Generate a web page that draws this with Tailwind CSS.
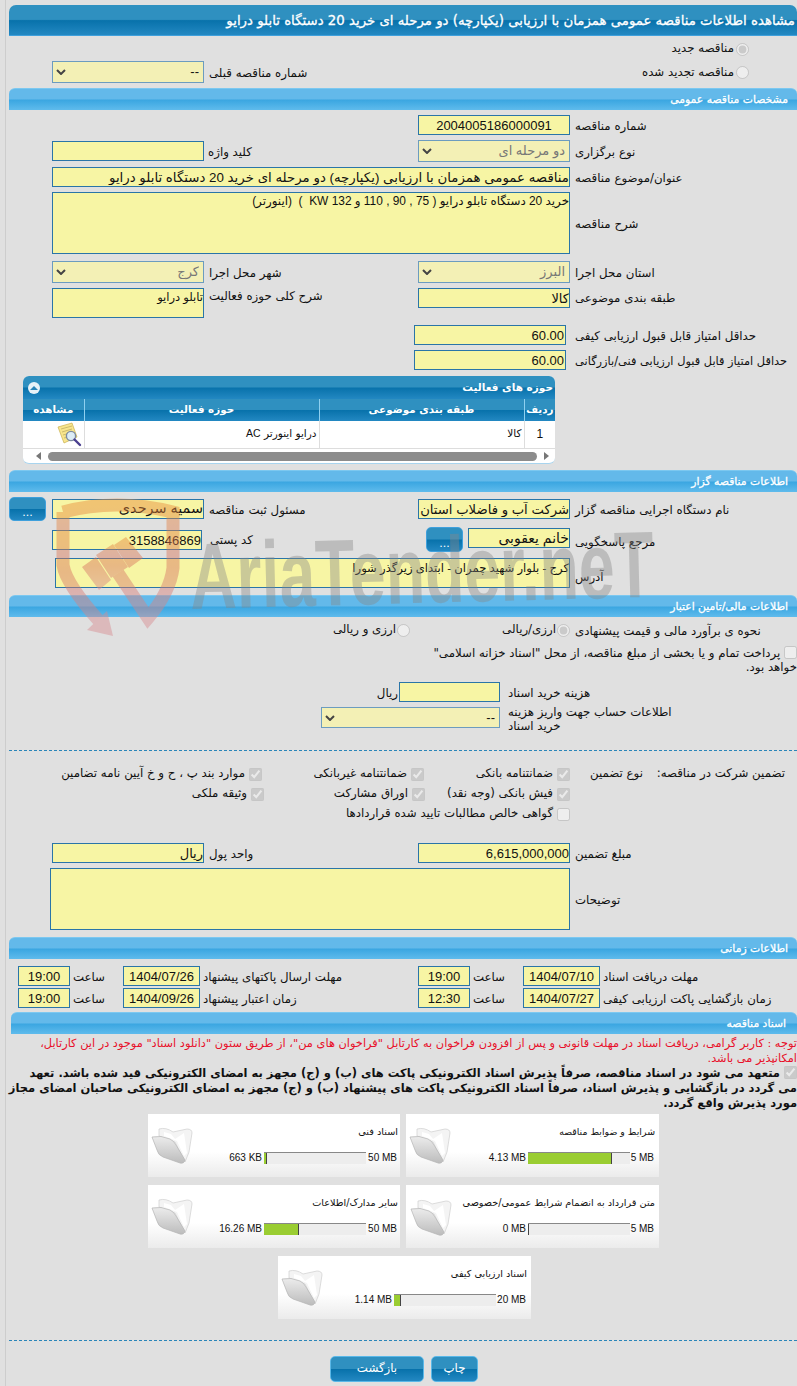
<!DOCTYPE html>
<html lang="fa" dir="rtl">

<head>
    <meta charset="UTF-8" />
    <meta name="viewport" content="width=device-width, initial-scale=1.0" />
    <title>مشاهده اطلاعات مناقصه</title>
    <script src="https://cdn.jsdelivr.net/npm/@tailwindcss/browser@4"></script>
</head>

<body class="bg-[#e0e0e0] font-['DejaVu_Sans',sans-serif] text-[11.8px] text-[#111] overflow-x-hidden">

    <svg class="absolute size-0">
        <defs>
            <linearGradient id="fold" x1="0" y1="0" x2="0" y2="1">
                <stop offset="0" stop-color="#ececec" />
                <stop offset="1" stop-color="#bcbcbc" />
            </linearGradient>
            <symbol id="folder" viewBox="0 0 42 38">
                <path d="M8 2 Q15 0 22 5 L36 2 Q41 2 41 6 L38 25 L34 35 L24 15 L8 9 Z" fill="#f4f4f4" stroke="#cfcfcf" stroke-width=".7" />
                <path d="M13 5 L20 7 L24 12 L33 6 L36 26 L33 29 L26 14 L13 9 Z" fill="#fff" />
                <path d="M1 10 Q10 8 19 12 Q23 14 25 18 L34 33 Q33 37 29 36 L12 30 Q7 28 6 23 Z" fill="url(#fold)" stroke="#b4b4b4" stroke-width=".7" />
            </symbol>
            <symbol id="chev" viewBox="0 0 10 6">
                <path d="M1 1 L5 5 L9 1" fill="none" stroke="#444" stroke-width="2" />
            </symbol>
        </defs>
    </svg>

    <main class="relative ml-[5px] w-[792px] border-l border-[#cdcdcd] pl-[3px] pt-[5px] h-[1386px] overflow-hidden [&_input]:font-['Liberation_Sans','DejaVu_Sans',sans-serif] [&_textarea]:font-['Liberation_Sans','DejaVu_Sans',sans-serif] [&_select]:font-['Liberation_Sans','DejaVu_Sans',sans-serif] [&_.text-left]:translate-y-[2px]">

        <!-- Title -->
        <h1 class="h-[31px] rounded-t-[7px] border-b border-[#3fa0dc] bg-[linear-gradient(#2f90c0_0%,#2f90c0_48%,#0872ab_52%,#2388c2_100%)] pr-[2px] text-[13.3px] leading-[32px] font-normal [-webkit-text-stroke:0.3px_white] text-white whitespace-nowrap">مشاهده اطلاعات مناقصه عمومی همزمان با ارزیابی (یکپارچه) دو مرحله ای خرید 20 دستگاه تابلو درایو</h1>

        <!-- Radios -->
        <div class="flex h-[24px] items-center pr-[48px]">
            <label class="flex translate-y-[1px] items-center gap-[2px]"><input type="radio" disabled checked class="size-[13px] m-0" />مناقصه جدید</label>
        </div>
        <div class="flex h-[28px] items-start">
            <label class="flex w-[379px] translate-y-[1px] items-center gap-[2px] pr-[48px] pt-[3px]"><input type="radio" disabled class="size-[13px] m-0" />مناقصه تجدید شده</label>
            <div class="w-[214px] pl-[5px] pt-[3px] text-left">شماره مناقصه قبلی</div>
            <div class="relative mt-[1px] h-[22px] w-[152px]">
                <select class="size-full appearance-none border border-[#6c9cbf] bg-[#f3f0b5] pr-[4px] text-[13px]"><option>--</option></select>
                <svg class="pointer-events-none absolute left-[4px] top-[8px]" width="10" height="6"><use href="#chev" /></svg>
            </div>
        </div>

        <!-- General -->
        <h2 class="h-[22px] rounded-t-[6px] border-t border-[#7cc8f0] bg-[linear-gradient(#63b9ea_0%,#63b9ea_48%,#3aa6e1_52%,#5fbbec_100%)] pr-[9px] text-[10.8px] leading-[21px] font-normal [-webkit-text-stroke:0.3px_white] text-white">مشخصات مناقصه عمومی</h2>

        <div class="mt-[5px] flex h-[20px] items-center">
            <div class="w-[227px] pl-[5px] text-left">شماره مناقصه</div>
            <input readonly value="2004005186000091" dir="ltr" class="h-[20px] w-[152px] border border-[#2a75a8] bg-[#f7f5a4] text-center text-[13px]" />
        </div>
        <div class="mt-[5px] flex h-[22px] items-center">
            <div class="w-[227px] pl-[5px] text-left">نوع برگزاری</div>
            <div class="relative h-[22px] w-[152px]">
                <select class="size-full appearance-none border border-[#6c9cbf] bg-[#f3f0b5] pr-[4px] text-[13px] text-[#777]"><option>دو مرحله ای</option></select>
                <svg class="pointer-events-none absolute left-[4px] top-[8px]" width="10" height="6"><use href="#chev" /></svg>
            </div>
            <div class="w-[214px] pl-[4px] text-left">کلید واژه</div>
            <input readonly class="h-[20px] w-[152px] border border-[#2a75a8] bg-[#f7f5a4]" />
        </div>
        <div class="mt-[5px] flex h-[20px] items-center">
            <div class="w-[227px] pl-[5px] text-left">عنوان/موضوع مناقصه</div>
            <input readonly value="مناقصه عمومی همزمان با ارزیابی (یکپارچه) دو مرحله ای خرید 20 دستگاه تابلو درایو" class="h-[20px] w-[518px] border border-[#2a75a8] bg-[#f7f5a4] text-[13.33px]" />
        </div>
        <div class="mt-[5px] flex h-[62px] items-center">
            <div class="w-[227px] pl-[5px] text-left">شرح مناقصه</div>
            <textarea readonly class="h-[62px] w-[518px] resize-none border border-[#2a75a8] bg-[#f7f5a4] text-[11.9px]">خرید 20 دستگاه تابلو درایو ( 75 , 90 , 110 و 132 KW  )  (اینورتر)</textarea>
        </div>
        <div class="mt-[7px] flex h-[22px] items-center">
            <div class="w-[227px] pl-[5px] text-left">استان محل اجرا</div>
            <div class="relative h-[22px] w-[152px]">
                <select class="size-full appearance-none border border-[#6c9cbf] bg-[#f3f0b5] pr-[4px] text-[13px] text-[#777]"><option>البرز</option></select>
                <svg class="pointer-events-none absolute left-[4px] top-[8px]" width="10" height="6"><use href="#chev" /></svg>
            </div>
            <div class="w-[214px] pl-[5px] text-left">شهر محل اجرا</div>
            <div class="relative h-[22px] w-[152px]">
                <select class="size-full appearance-none border border-[#6c9cbf] bg-[#f3f0b5] pr-[4px] text-[13px] text-[#777]"><option>کرج</option></select>
                <svg class="pointer-events-none absolute left-[4px] top-[8px]" width="10" height="6"><use href="#chev" /></svg>
            </div>
        </div>
        <div class="mt-[5px] flex h-[30px] items-start">
            <div class="w-[227px] pl-[5px] text-left">طبقه بندی موضوعی</div>
            <input readonly value="کالا" class="h-[20px] w-[152px] border border-[#2a75a8] bg-[#f7f5a4] text-[13px]" />
            <div class="-mt-[2px] w-[214px] pl-[5px] text-left">شرح کلی حوزه فعالیت</div>
            <textarea readonly class="h-[30px] w-[152px] resize-none border border-[#2a75a8] bg-[#f7f5a4] text-[11.5px]">تابلو درایو</textarea>
        </div>
        <div class="mt-[7px] flex h-[20px] items-center">
            <div class="w-[231px] pl-[9px] text-left">حداقل امتیاز قابل قبول ارزیابی کیفی</div>
            <input readonly value="60.00" class="h-[20px] w-[152px] border border-[#2a75a8] bg-[#f7f5a4] pr-[1px] text-[13px]" />
        </div>
        <div class="mt-[5px] flex h-[20px] items-center">
            <div class="w-[231px] pl-[9px] text-left whitespace-nowrap text-[11.4px]">حداقل امتیاز قابل قبول ارزیابی فنی/بازرگانی</div>
            <input readonly value="60.00" class="h-[20px] w-[152px] border border-[#2a75a8] bg-[#f7f5a4] pr-[1px] text-[13px]" />
        </div>

        <!-- Activity table -->
        <div class="mr-[242px] mt-[6px] h-[88px] w-[532px] overflow-hidden rounded-[6px] border-b border-[#a8d4ee] bg-white">
            <div class="flex h-[23px] items-center justify-between bg-[linear-gradient(#2f90c0_0%,#2f90c0_48%,#0872ab_52%,#2388c2_100%)] pl-[5px] pr-[2px] text-[10.5px] font-bold text-white">
                <span>حوزه های فعالیت</span>
                <span class="flex size-[12px] items-center justify-center rounded-full bg-[#e8f2f8]"><span class="border-x-[4px] border-b-[4px] border-x-transparent border-b-[#2a85b8]"></span></span>
            </div>
            <table class="w-[532px] table-fixed text-[10.5px]">
                <thead class="bg-[linear-gradient(#2f90c0_0%,#2f90c0_48%,#0872ab_52%,#2388c2_100%)] text-white">
                    <tr class="h-[22px]">
                        <th class="w-[31px] border-l border-[#8fd0f0] text-[10.4px] font-bold">ردیف</th>
                        <th class="w-[205px] border-l border-[#8fd0f0] text-[10.4px] font-bold">طبقه بندی موضوعی</th>
                        <th class="w-[235px] border-l border-[#8fd0f0] text-[10.4px] font-bold">حوزه فعالیت</th>
                        <th class="w-[61px] text-[10.4px] font-bold">مشاهده</th>
                    </tr>
                </thead>
                <tbody>
                    <tr class="h-[27px] border-b border-[#ddd]">
                        <td class="border-l border-[#ddd] text-center font-['Liberation_Sans',sans-serif] text-[12px]">1</td>
                        <td class="border-l border-[#ddd] pr-[2px]">کالا</td>
                        <td class="border-l border-[#ddd] pr-[2px]">درایو اینورتر <span class="font-['Liberation_Sans',sans-serif]">AC</span></td>
                        <td class="p-0">
                            <svg class="mr-[2px] block" width="25" height="25" viewBox="0 0 25 25">
                                <path d="M1 5 L15 1 L20 15 L7 21 Z" fill="#f8e58c" stroke="#c9b050" stroke-width=".7" />
                                <path d="M4 7 L15 4 M5 10 L15 7 M6 13 L13 11 M7 16 L11 15" stroke="#b8a860" stroke-width=".7" />
                                <circle cx="14" cy="14" r="4.6" fill="#dcecf6" stroke="#7d8ca0" stroke-width="1.4" />
                                <path d="M17.5 17.5 L23 23" stroke="#4a3f8f" stroke-width="2.4" stroke-linecap="round" />
                            </svg>
                        </td>
                    </tr>
                </tbody>
            </table>
            <div class="flex h-[15px] items-center px-[6px]">
                <span class="border-y-[4px] border-l-[5px] border-y-transparent border-l-[#777]"></span>
                <span class="mx-[7px] h-[9px] w-[489px] rounded-full bg-[#8c8c8c]"></span>
                <span class="border-y-[4px] border-r-[5px] border-y-transparent border-r-[#777]"></span>
            </div>
        </div>

        <!-- Tender organizer -->
        <h2 class="mt-[6px] h-[22px] rounded-t-[6px] border-t border-[#7cc8f0] bg-[linear-gradient(#63b9ea_0%,#63b9ea_48%,#3aa6e1_52%,#5fbbec_100%)] pr-[9px] text-[10.8px] leading-[21px] font-normal [-webkit-text-stroke:0.3px_white] text-white">اطلاعات مناقصه گزار</h2>

        <div class="mt-[5px] flex h-[24px] items-center">
            <div class="w-[227px] pl-[5px] text-left">نام دستگاه اجرایی مناقصه گزار</div>
            <input readonly value="شرکت آب و فاضلاب استان" class="h-[20px] w-[152px] border border-[#2a75a8] bg-[#f7f5a4] text-[13.2px]" />
            <div class="w-[214px] pl-[5px] text-left">مسئول ثبت مناقصه</div>
            <input readonly value="سمیه سرحدی" class="h-[20px] w-[152px] border border-[#2a75a8] bg-[#f7f5a4] text-[14.4px]" />
            <button class="mr-[6px] h-[24px] w-[37px] rounded-[5px] border border-[#3fa0dc] bg-[linear-gradient(#2f90c0_0%,#2f90c0_48%,#0872ab_52%,#2388c2_100%)] pt-[7px] text-[11px] leading-none text-white">...</button>
        </div>
        <div class="mt-[6px] flex h-[25px] items-start">
            <div class="w-[227px] pl-[5px] pt-[5px] text-left">مرجع پاسخگویی</div>
            <input readonly value="خانم یعقوبی" class="mt-[1px] h-[20px] w-[102px] border border-[#2a75a8] bg-[#f7f5a4] text-[14px]" />
            <button class="mr-[5px] h-[25px] w-[37px] rounded-[5px] border border-[#3fa0dc] bg-[linear-gradient(#2f90c0_0%,#2f90c0_48%,#0872ab_52%,#2388c2_100%)] pt-[7px] text-[11px] leading-none text-white">...</button>
            <div class="w-[224px] pl-[8px] pt-[3px] text-left">کد پستی</div>
            <input readonly value="3158846869" class="mt-[3px] h-[20px] w-[150px] border border-[#2a75a8] bg-[#f7f5a4] text-[13px]" />
        </div>
        <div class="mt-[6px] flex h-[30px] items-end">
            <div class="w-[227px] pl-[5px] pb-[3px] text-left">آدرس</div>
            <textarea readonly class="h-[30px] w-[515px] resize-none border border-[#2a75a8] bg-[#f7f5a4] text-[11.6px]">کرج - بلوار شهید چمران - ابتدای زیرگذر شورا</textarea>
        </div>

        <!-- Finance -->
        <h2 class="mt-[7px] h-[22px] rounded-t-[6px] border-t border-[#7cc8f0] bg-[linear-gradient(#63b9ea_0%,#63b9ea_48%,#3aa6e1_52%,#5fbbec_100%)] pr-[9px] text-[10.8px] leading-[21px] font-normal [-webkit-text-stroke:0.3px_white] text-white">اطلاعات مالی/تامین اعتبار</h2>

        <div class="mt-[3px] flex h-[20px] items-center">
            <div class="w-[227px] pl-[5px] text-left">نحوه ی برآورد مالی و قیمت پیشنهادی</div>
            <label class="flex w-[160px] items-center gap-[1px]"><input type="radio" disabled checked class="size-[13px] m-0" />ارزی/ریالی</label>
            <label class="flex items-center gap-[1px]"><input type="radio" disabled class="size-[13px] m-0" />ارزی و ریالی</label>
        </div>
        <p class="mt-[6px] h-[30px] w-[380px] leading-[14px]"><input type="checkbox" disabled class="ml-0 size-[13px] align-top" /> پرداخت تمام و یا بخشی از مبلغ مناقصه، از محل "اسناد خزانه اسلامی" خواهد بود.</p>
        <div class="mt-[6px] flex h-[20px] items-center">
            <div class="w-[297px] pl-[8px] text-left">هزینه خرید اسناد</div>
            <input readonly class="h-[20px] w-[101px] border border-[#2a75a8] bg-[#f7f5a4]" />
            <span class="mr-[1px] translate-y-[2px]">ریال</span>
        </div>
        <div class="mt-[5px] flex h-[28px] items-start">
            <div class="-mt-[4px] w-[297px] pl-[8px] pr-[118px] text-left leading-[14px]">اطلاعات حساب جهت واریز هزینه خرید اسناد</div>
            <div class="relative h-[21px] w-[179px]">
                <select class="size-full appearance-none border border-[#6c9cbf] bg-[#f3f0b5] pr-[4px] text-[13px]"><option>--</option></select>
                <svg class="pointer-events-none absolute left-[4px] top-[8px]" width="10" height="6"><use href="#chev" /></svg>
            </div>
        </div>

        <div class="mt-[15px] border-t border-dashed border-[#2a85b8]"></div>

        <!-- Guarantee -->
        <div class="mt-[13px] flex h-[20px] items-center">
            <div class="w-[154px] pr-[12px]">تضمین شرکت در مناقصه:</div>
            <div class="w-[73px]">نوع تضمین</div>
            <label class="flex w-[146px] items-center gap-[4px]"><input type="checkbox" disabled checked class="size-[13px] m-0" />ضمانتنامه بانکی</label>
            <label class="flex w-[162px] items-center gap-[4px]"><input type="checkbox" disabled checked class="size-[13px] m-0" />ضمانتنامه غیربانکی</label>
            <label class="flex items-center gap-[4px]"><input type="checkbox" disabled checked class="size-[13px] m-0" />موارد بند پ ، ح و خ آیین نامه تضامین</label>
        </div>
        <div class="flex h-[20px] items-center">
            <div class="w-[227px]"></div>
            <label class="flex w-[145px] items-center gap-[4px]"><input type="checkbox" disabled checked class="size-[13px] m-0" />فیش بانکی (وجه نقد)</label>
            <label class="flex w-[161px] items-center gap-[4px]"><input type="checkbox" disabled checked class="size-[13px] m-0" />اوراق مشارکت</label>
            <label class="flex items-center gap-[4px]"><input type="checkbox" disabled checked class="size-[13px] m-0" />وثیقه ملکی</label>
        </div>
        <div class="flex h-[20px] items-center">
            <div class="w-[227px]"></div>
            <label class="flex items-center gap-[4px]"><input type="checkbox" disabled class="size-[13px] m-0" />گواهی خالص مطالبات تایید شده قراردادها</label>
        </div>

        <div class="mt-[19px] flex h-[20px] items-center">
            <div class="w-[227px] pl-[5px] text-left">مبلغ تضمین</div>
            <input readonly value="6,615,000,000" class="h-[20px] w-[152px] border border-[#2a75a8] bg-[#f7f5a4] text-[13px]" />
            <div class="w-[214px] pl-[5px] text-left">واحد پول</div>
            <input readonly value="ریال" class="h-[20px] w-[152px] border border-[#2a75a8] bg-[#f7f5a4] text-[13px]" />
        </div>
        <div class="mt-[5px] flex h-[62px] items-center">
            <div class="w-[227px] pl-[5px] text-left">توضیحات</div>
            <textarea readonly class="h-[62px] w-[520px] resize-none border border-[#2a75a8] bg-[#f7f5a4]"></textarea>
        </div>

        <!-- Dates -->
        <h2 class="mt-[7px] h-[22px] rounded-t-[6px] border-t border-[#7cc8f0] bg-[linear-gradient(#63b9ea_0%,#63b9ea_48%,#3aa6e1_52%,#5fbbec_100%)] pr-[9px] text-[10.8px] leading-[21px] font-normal [-webkit-text-stroke:0.3px_white] text-white">اطلاعات زمانی</h2>

        <div class="mt-[7px] flex h-[20px] items-center">
            <div class="w-[197px] pl-[3px] text-left">مهلت دریافت اسناد</div>
            <input readonly value="1404/07/10" class="h-[20px] w-[77px] border border-[#2a75a8] bg-[#f7f5a4] text-center text-[13px]" />
            <div class="w-[53px] pl-[2px] text-left"><span class="inline-block w-[33px] text-right">ساعت</span></div>
            <input readonly value="19:00" class="h-[20px] w-[52px] border border-[#2a75a8] bg-[#f7f5a4] text-center text-[13px]" />
            <div class="w-[218px] pl-[3px] text-left">مهلت ارسال پاکتهای پیشنهاد</div>
            <input readonly value="1404/07/26" class="h-[20px] w-[77px] border border-[#2a75a8] bg-[#f7f5a4] text-center text-[13px]" />
            <div class="w-[53px] pl-[2px] text-left"><span class="inline-block w-[33px] text-right">ساعت</span></div>
            <input readonly value="19:00" class="h-[20px] w-[52px] border border-[#2a75a8] bg-[#f7f5a4] text-center text-[13px]" />
        </div>
        <div class="mt-[2px] flex h-[20px] items-center">
            <div class="w-[197px] pl-[3px] text-left">زمان بازگشایی پاکت ارزیابی کیفی</div>
            <input readonly value="1404/07/27" class="h-[20px] w-[77px] border border-[#2a75a8] bg-[#f7f5a4] text-center text-[13px]" />
            <div class="w-[53px] pl-[2px] text-left"><span class="inline-block w-[33px] text-right">ساعت</span></div>
            <input readonly value="12:30" class="h-[20px] w-[52px] border border-[#2a75a8] bg-[#f7f5a4] text-center text-[13px]" />
            <div class="w-[218px] pl-[3px] text-left">زمان اعتبار پیشنهاد</div>
            <input readonly value="1404/09/26" class="h-[20px] w-[77px] border border-[#2a75a8] bg-[#f7f5a4] text-center text-[13px]" />
            <div class="w-[53px] pl-[2px] text-left"><span class="inline-block w-[33px] text-right">ساعت</span></div>
            <input readonly value="19:00" class="h-[20px] w-[52px] border border-[#2a75a8] bg-[#f7f5a4] text-center text-[13px]" />
        </div>

        <!-- Documents -->
        <h2 class="ml-[2px] mt-[4px] h-[22px] rounded-t-[6px] border-t border-[#7cc8f0] bg-[linear-gradient(#63b9ea_0%,#63b9ea_48%,#3aa6e1_52%,#5fbbec_100%)] pr-[11px] text-[10.8px] leading-[21px] font-normal [-webkit-text-stroke:0.3px_white] text-white">اسناد مناقصه</h2>

        <p class="mt-[2px] h-[30px] text-[11.37px] leading-[15px] text-[#e8102a]">توجه : کاربر گرامی، دریافت اسناد در مهلت قانونی و پس از افزودن فراخوان به کارتابل "فراخوان های من"، از طریق ستون "دانلود اسناد" موجود در این کارتابل، امکانپذیر می باشد.</p>
        <p class="h-[45px] text-[11.5px] leading-[15px] font-bold whitespace-nowrap"><input type="checkbox" disabled checked class="size-[13px] align-top ml-[4px]" />متعهد می شود در اسناد مناقصه، صرفاً پذیرش اسناد الکترونیکی پاکت های (ب) و (ج) مجهز به امضای الکترونیکی قید شده باشد. تعهد<br />می گردد در بازگشایی و پذیرش اسناد، صرفاً اسناد الکترونیکی پاکت های پیشنهاد (ب) و (ج) مجهز به امضای الکترونیکی صاحبان امضای مجاز<br />مورد پذیرش واقع گردد.</p>

        <div class="mr-[138px] mt-[3px] flex gap-[6px]">
            <div class="relative h-[63px] w-[253px] bg-[linear-gradient(#fff_60%,#ebebeb_100%)] text-[10px] whitespace-nowrap">
                <div class="pr-[4px] pt-[11px] text-[9.4px] leading-[14px]">شرایط و ضوابط مناقصه</div>
                <div class="mt-[11px] flex items-center pr-[5px] font-['Liberation_Sans',sans-serif]">
                    <span class="w-[24px] text-right" dir="ltr">5 MB</span>
                    <div class="h-[12px] w-[102px] border-t border-[#888] bg-[#ededed]" dir="ltr"><div class="h-full w-[84px] border-r border-[#444] bg-[#9acd32]"></div></div>
                    <span class="mr-[2px]" dir="ltr">4.13 MB</span>
                </div>
                <svg class="absolute left-[3px] top-[13px]" width="42" height="38"><use href="#folder" /></svg>
            </div>
            <div class="relative h-[63px] w-[252px] bg-[linear-gradient(#fff_60%,#ebebeb_100%)] text-[10px] whitespace-nowrap">
                <div class="pr-[2px] pt-[11px] text-[9.7px] leading-[14px]">اسناد فنی</div>
                <div class="mt-[11px] flex items-center pr-[3px] font-['Liberation_Sans',sans-serif]">
                    <span class="w-[31px] text-right" dir="ltr">50 MB</span>
                    <div class="h-[12px] w-[102px] border-t border-[#888] bg-[#ededed]" dir="ltr"><div class="h-full w-[3px] border-r border-[#444] bg-[#9acd32]"></div></div>
                    <span class="mr-[2px]" dir="ltr">663 KB</span>
                </div>
                <svg class="absolute left-[3px] top-[13px]" width="42" height="38"><use href="#folder" /></svg>
            </div>
        </div>
        <div class="mr-[138px] mt-[8px] flex gap-[6px]">
            <div class="relative h-[63px] w-[253px] bg-[linear-gradient(#fff_60%,#ebebeb_100%)] text-[10px] whitespace-nowrap">
                <div class="pr-[4px] pt-[11px] text-[9.7px] leading-[14px]">متن قرارداد به انضمام شرایط عمومی/خصوصی</div>
                <div class="mt-[11px] flex items-center pr-[5px] font-['Liberation_Sans',sans-serif]">
                    <span class="w-[24px] text-right" dir="ltr">5 MB</span>
                    <div class="h-[12px] w-[102px] border-t border-[#888] bg-[#ededed]" dir="ltr"><div class="h-full w-[1px] border-r border-[#444]"></div></div>
                    <span class="mr-[2px]" dir="ltr">0 MB</span>
                </div>
                <svg class="absolute left-[4px] top-[14px]" width="42" height="38"><use href="#folder" /></svg>
            </div>
            <div class="relative h-[63px] w-[252px] bg-[linear-gradient(#fff_60%,#ebebeb_100%)] text-[10px] whitespace-nowrap">
                <div class="pr-[2px] pt-[11px] text-[9.7px] leading-[14px]">سایر مدارک/اطلاعات</div>
                <div class="mt-[11px] flex items-center pr-[3px] font-['Liberation_Sans',sans-serif]">
                    <span class="w-[31px] text-right" dir="ltr">50 MB</span>
                    <div class="h-[12px] w-[102px] border-t border-[#888] bg-[#ededed]" dir="ltr"><div class="h-full w-[35px] border-r border-[#444] bg-[#9acd32]"></div></div>
                    <span class="mr-[2px]" dir="ltr">16.26 MB</span>
                </div>
                <svg class="absolute left-[3px] top-[13px]" width="42" height="38"><use href="#folder" /></svg>
            </div>
        </div>
        <div class="mr-[266px] mt-[8px] relative h-[63px] w-[253px] bg-[linear-gradient(#fff_60%,#ebebeb_100%)] text-[10px] whitespace-nowrap">
            <div class="pr-[4px] pt-[11px] text-[9.7px] leading-[14px]">اسناد ارزیابی کیفی</div>
            <div class="mt-[11px] flex items-center pr-[5px] font-['Liberation_Sans',sans-serif]">
                <span class="w-[30px] text-right" dir="ltr">20 MB</span>
                <div class="h-[12px] w-[102px] border-t border-[#888] bg-[#ededed]" dir="ltr"><div class="h-full w-[7px] border-r border-[#444] bg-[#9acd32]"></div></div>
                <span class="mr-[2px]" dir="ltr">1.14 MB</span>
            </div>
            <svg class="absolute left-[3px] top-[13px]" width="42" height="38"><use href="#folder" /></svg>
        </div>

        <div class="mt-[21px] border-t border-dashed border-[#2a85b8]"></div>

        <div class="mr-[319px] mt-[15px] flex gap-[7px]">
            <button class="h-[26px] w-[47px] rounded-[5px] border border-[#5ab8e8] bg-[linear-gradient(#2f90c0_0%,#2f90c0_48%,#0872ab_52%,#2388c2_100%)] text-white">چاپ</button>
            <button class="h-[26px] w-[94px] rounded-[5px] border border-[#5ab8e8] bg-[linear-gradient(#2f90c0_0%,#2f90c0_48%,#0872ab_52%,#2388c2_100%)] text-white">بازگشت</button>
        </div>

        <!-- Watermark -->
        <svg class="pointer-events-none absolute left-[35px] top-[495px] opacity-45" width="150" height="150" viewBox="35 495 150 150">
            <defs>
                <linearGradient id="wm" x1="0" y1="0" x2="0" y2="1">
                    <stop offset="0" stop-color="#e88a3a" />
                    <stop offset=".55" stop-color="#d77060" />
                    <stop offset="1" stop-color="#d88a90" />
                </linearGradient>
            </defs>
            <path d="M57 512 Q110 498 167 512 L167 568 Q164 592 142 618 L112 573" fill="none" stroke="url(#wm)" stroke-width="13" />
            <path d="M57 512 L57 565 Q60 584 94 622" fill="none" stroke="url(#wm)" stroke-width="13" />
            <path d="M81 630 L101 611 L107 636 Z" fill="#d88a90" />
            <path d="M76 567 L90 557 L105 580 L93 590 Z M90 555 L107 544 L122 567 L105 578 Z M108 545 L120 537 L137 558 L123 568 Z" fill="url(#wm)" />
        </svg>
        <span dir="ltr" class="pointer-events-none absolute left-[184px] top-[517px] origin-left -rotate-[1.5deg] scale-x-[.685] font-['Liberation_Sans',sans-serif] text-[94px] leading-[120px] font-bold whitespace-nowrap text-[#888]/40">AriaTender.neT</span>
    </main>

</body>

</html>
